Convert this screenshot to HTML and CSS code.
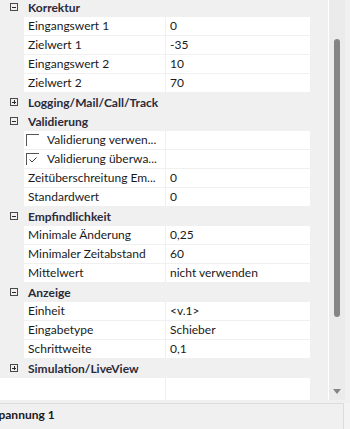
FILE: index.html
```html
<!DOCTYPE html>
<html>
<head>
<meta charset="utf-8">
<link rel="stylesheet" href="styles.css">
</head>
<body>
<div class="window">
  <div class="main">
    <div class="grid">
      <div class="cat"><span class="toggle minus"></span><span class="cat-name">Korrektur</span></div>
      <div class="row"><div class="lbl">Eingangswert 1</div><div class="val">0</div></div>
      <div class="row"><div class="lbl">Zielwert 1</div><div class="val">-35</div></div>
      <div class="row"><div class="lbl">Eingangswert 2</div><div class="val">10</div></div>
      <div class="row"><div class="lbl">Zielwert 2</div><div class="val">70</div></div>
      <div class="cat"><span class="toggle plus"></span><span class="cat-name">Logging/Mail/Call/Track</span></div>
      <div class="cat"><span class="toggle minus"></span><span class="cat-name">Validierung</span></div>
      <div class="row"><div class="lbl chk"><span class="box"></span>Validierung verwen...</div><div class="val"></div></div>
      <div class="row"><div class="lbl chk"><span class="box checked"><svg width="8" height="6" viewBox="0 0 8 6"><path d="M0.5 2.5 L3 5 L7.5 0.5" fill="none" stroke="#3a3a3a" stroke-width="1"/></svg></span>Validierung überwa...</div><div class="val"></div></div>
      <div class="row"><div class="lbl">Zeitüberschreitung Em...</div><div class="val">0</div></div>
      <div class="row"><div class="lbl">Standardwert</div><div class="val">0</div></div>
      <div class="cat"><span class="toggle minus"></span><span class="cat-name">Empfindlichkeit</span></div>
      <div class="row"><div class="lbl">Minimale Änderung</div><div class="val">0,25</div></div>
      <div class="row"><div class="lbl">Minimaler Zeitabstand</div><div class="val">60</div></div>
      <div class="row"><div class="lbl">Mittelwert</div><div class="val">nicht verwenden</div></div>
      <div class="cat"><span class="toggle minus"></span><span class="cat-name">Anzeige</span></div>
      <div class="row"><div class="lbl">Einheit</div><div class="val">&lt;v.1&gt;</div></div>
      <div class="row"><div class="lbl">Eingabetype</div><div class="val">Schieber</div></div>
      <div class="row"><div class="lbl">Schrittweite</div><div class="val">0,1</div></div>
      <div class="cat"><span class="toggle plus"></span><span class="cat-name">Simulation/LiveView</span></div>
      <div class="blank"><div class="blank-l"></div><div class="blank-r"></div></div>
    </div>
    <div class="gutter"></div>
    <div class="divider"></div>
    <div class="scrollbar">
      <div class="thumb"></div>
      <div class="arrow"></div>
    </div>
    <div class="edge"></div>
  </div>
  <div class="bottom">
    <div class="panel"><span class="tab-title">Spannung 1</span></div>
    <div class="bottom-edge"></div>
  </div>
</div>
</body>
</html>
```
FILE: styles.css
```css
* { box-sizing: border-box; }
html, body { margin: 0; padding: 0; }
body {
  width: 350px;
  height: 429px;
  overflow: hidden;
  background: #f0f0f0;
  font-family: Lato, "Noto Sans", sans-serif;
  font-size: 12px;
  color: #1a1a1a;
}
.window { display: flex; flex-direction: column; height: 429px; }
.main { display: flex; height: 400px; overflow: hidden; }
.grid {
  width: 310px;
  flex: none;
  margin-top: -2px;
  background: #f0f0f0;
  display: flex;
  flex-direction: column;
}
.cat {
  height: 18px;
  margin-bottom: 1px;
  display: flex;
  align-items: center;
}
.toggle {
  width: 8px;
  height: 8px;
  margin-left: 10px;
  border: 1px solid #4a4a4a;
  position: relative;
  flex: none;
}
.toggle::before {
  content: "";
  position: absolute;
  left: 1px; top: 2.5px;
  width: 4px; height: 1px;
  background: #2a2a2a;
}
.toggle.plus::after {
  content: "";
  position: absolute;
  left: 2.5px; top: 1px;
  width: 1px; height: 4px;
  background: #2a2a2a;
}
.cat-name {
  margin-left: 10px;
  font-weight: bold;
  color: #2b2b3a;
  white-space: nowrap;
}
.row {
  height: 18px;
  margin-bottom: 1px;
  display: grid;
  grid-template-columns: 141px 144px;
  column-gap: 1px;
  margin-left: 24px;
}
.lbl, .val {
  background: #fff;
  padding-left: 4px;
  line-height: 18px;
  white-space: nowrap;
  overflow: hidden;
}
.lbl.chk { display: flex; align-items: center; padding-left: 2px; }
.box {
  width: 13px;
  height: 12px;
  border-left: 1px solid #555;
  border-top: 1px solid #555;
  margin-right: 8px;
  flex: none;
  display: flex;
  align-items: flex-end;
  justify-content: flex-start;
  padding: 0 0 2px 2px;
}
.box svg { display: block; }
.blank {
  height: 22px;
  margin-top: 0;
  display: grid;
  grid-template-columns: 165px 144px;
  column-gap: 1px;
}
.blank-l, .blank-r { background: #fff; }
.gutter { width: 18px; flex: none; background: #f0f0f0; }
.divider { width: 1px; flex: none; background: #fff; }
.scrollbar {
  width: 16px;
  flex: none;
  background: #ebebeb;
  position: relative;
}
.thumb {
  position: absolute;
  left: 5px;
  top: 39px;
  width: 6px;
  height: 278px;
  background: #858585;
  border-radius: 3px 3px 3px 3px;
}
.arrow {
  position: absolute;
  left: 4px;
  top: 389px;
  width: 0; height: 0;
  border-left: 4px solid transparent;
  border-right: 4px solid transparent;
  border-top: 5px solid #858585;
}
.edge { flex: 1; background: #f0f0f0; }
.bottom { display: flex; flex: 1; padding-top: 3px; }
.panel {
  width: 344px;
  flex: none;
  border-top: 1px solid #dcdcdc;
  border-right: 1px solid #dcdcdc;
  background: #f0f0f0;
  overflow: hidden;
  padding-top: 3px;
}
.tab-title {
  display: block;
  margin-left: -8px;
  font-weight: bold;
  color: #1a1a1a;
  white-space: nowrap;
}
.bottom-edge { flex: 1; background: #f3f3f3; }
```
